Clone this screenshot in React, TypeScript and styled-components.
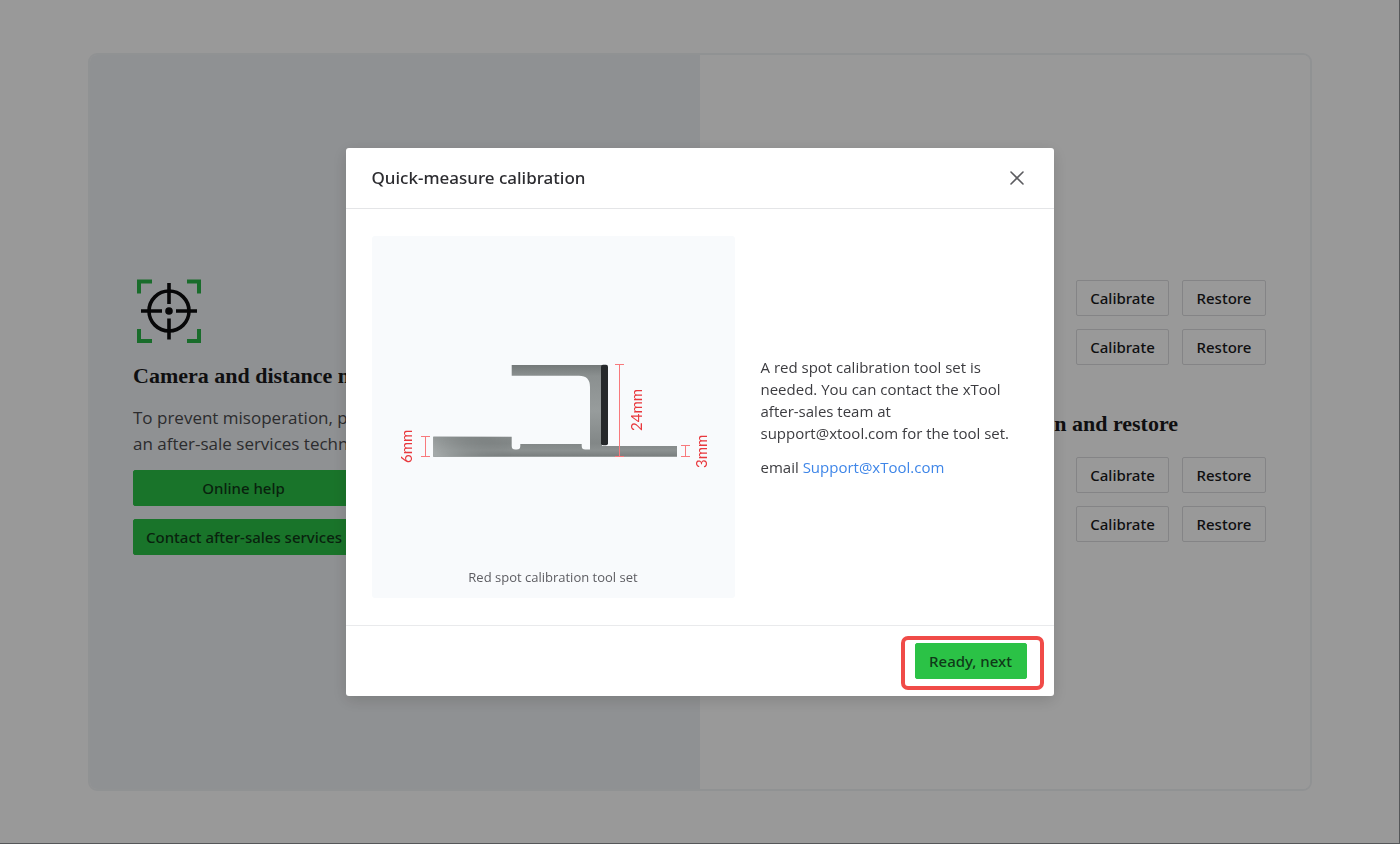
import React from "react";
import styled, { createGlobalStyle } from "styled-components";

const sans = `"Open Sans", "Noto Sans", sans-serif`;
const sansMedium = `"Noto Sans", "Open Sans", sans-serif`;

const GlobalStyle = createGlobalStyle`
  *, *::before, *::after { box-sizing: border-box; }
  body { margin: 0; background: #fff; color: #1a1a1c; font-family: ${sans}; }
  h1, h2, p, figure { margin: 0; }
`;

const Page = styled.main`
  display: flex;
  min-height: 100vh;
  padding: 53px 88px;
`;

const Card = styled.div`
  flex: 1;
  display: grid;
  grid-template-columns: 1fr 1fr;
  border: 2px solid #f1f3f6;
  border-radius: 9px;
  overflow: hidden;
`;

const Panel = styled.section<{ $tinted?: boolean }>`
  display: flex;
  flex-direction: column;
  justify-content: center;
  min-width: 0;
  padding: 0 44px ${(p) => (p.$tinted ? 14 : 68)}px 43px;
  background: ${(p) => (p.$tinted ? "#eff2f5" : "#fff")};
`;

const Heading = styled.h2`
  font-family: "Liberation Serif", serif;
  font-size: 22px;
  line-height: 26px;
  font-weight: 700;
  white-space: nowrap;
`;

const Intro = styled.p`
  margin: 16px 0 13px;
  font-size: 17px;
  line-height: 26px;
  color: #4a4a4e;
`;

const Target = styled.svg`
  display: block;
  width: 72px;
  height: 72px;
  margin-bottom: 16px;
`;

const Button = styled.button<{ $primary?: boolean; $width?: number }>`
  height: 36px;
  min-width: ${(p) => p.$width ?? 0}px;
  padding: 0 12px;
  border: 1px solid ${(p) => (p.$primary ? "#2bc246" : "#dcdddf")};
  border-radius: 2px;
  background: ${(p) => (p.$primary ? "#2bc246" : "#fff")};
  color: ${(p) => (p.$primary ? "#0f3a18" : "#1a1a1c")};
  font: 500 15px/20px ${sansMedium};
  white-space: nowrap;
`;

const HelpActions = styled.div`
  display: grid;
  gap: 13px;
  width: 221px;
`;

const Group = styled.div`
  & + & { margin-top: 46px; }
`;

const ActionRow = styled.div`
  display: flex;
  justify-content: flex-end;
  gap: 13px;
  margin-top: 13px;
  ${Heading} + & { margin-top: 20px; }
`;

const Overlay = styled.div`
  position: fixed;
  inset: 0;
  display: grid;
  place-items: center;
  background: rgba(0, 0, 0, 0.4);
  border: solid #555759;
  border-width: 0 1px 1px 0;
`;

const Dialog = styled.div`
  width: 708px;
  max-width: 100%;
  background: #fff;
  border-radius: 3px;
  box-shadow: 0 4px 16px rgba(0, 0, 0, 0.15);
`;

const DialogHeader = styled.header`
  display: flex;
  align-items: center;
  justify-content: space-between;
  height: 61px;
  padding: 0 26px;
  border-bottom: 1px solid #e4e5e7;
`;

const DialogTitle = styled.h1`
  font-family: ${sansMedium};
  font-size: 17px;
  line-height: 24px;
  font-weight: 500;
  color: #2c2c30;
`;

const Close = styled.button`
  display: grid;
  place-items: center;
  width: 22px;
  height: 22px;
  padding: 0;
  border: 0;
  background: none;
`;

const DialogBody = styled.div`
  display: grid;
  grid-template-columns: 363fr 267fr;
  gap: 26px;
  align-items: center;
  padding: 27px 26px;
`;

const Figure = styled.figure`
  display: flex;
  flex-direction: column;
  padding-bottom: 10px;
  background: #f8fafc;
  border-radius: 3px;
`;

const Caption = styled.figcaption`
  text-align: center;
  font-size: 13px;
  line-height: 22px;
  color: #5d5d62;
`;

const Drawing = styled.svg`
  display: block;
  width: 100%;
`;

const Copy = styled.div`
  display: grid;
  gap: 12px;
  font-size: 15px;
  line-height: 22px;
  color: #3c3c40;
  a { color: #3f86e8; text-decoration: none; }
`;

const DialogFooter = styled.footer`
  display: flex;
  justify-content: flex-end;
  height: 71px;
  padding: 17px 27px;
  border-top: 1px solid #e9eaec;
`;

const Highlight = styled.div`
  position: relative;
  height: 36px;
  &::after {
    content: "";
    position: absolute;
    inset: -7px -17px -11px -14px;
    border: 4px solid #f04b48;
    border-radius: 7px;
    pointer-events: none;
  }
`;

const groups = ["Camera calibration", "Distance Measurement calibration and restore"];

function TargetIcon() {
  return (
    <Target viewBox="0 0 72 72" fill="none" aria-hidden="true">
      <g stroke="#2bb548" strokeWidth="4">
        <path d="M6 18.500V6.500h13M54 6.500h12v12M66 54v12H54M19 66H6V54" />
      </g>
      <g stroke="#0c0c0e" strokeWidth="3.600">
        <circle cx="36" cy="36" r="20" />
        <path d="M36 8v21M36 43.500v21M8 36h21M43 36h21" />
      </g>
      <circle cx="36" cy="36" r="3.800" fill="#0c0c0e" />
    </Target>
  );
}

function ToolDrawing() {
  return (
    <Drawing viewBox="0 0 363 330" role="img" aria-label="Red spot calibration tool set">
      <defs>
        <linearGradient id="block" x1="75" y1="224" x2="95" y2="190" gradientUnits="userSpaceOnUse">
          <stop offset="0" stopColor="#a4a9a9" />
          <stop offset="0.5" stopColor="#8c9191" />
          <stop offset="1" stopColor="#737878" />
        </linearGradient>
        <linearGradient id="fade" x1="61" y1="0" x2="140" y2="0" gradientUnits="userSpaceOnUse">
          <stop offset="0" stopColor="#fff" />
          <stop offset="1" stopColor="#fff" stopOpacity="0" />
        </linearGradient>
        <mask id="blockMask">
          <rect x="61" y="200" width="79" height="21" fill="url(#fade)" />
        </mask>
        <linearGradient id="arm" x1="0" y1="129" x2="0" y2="221" gradientUnits="userSpaceOnUse">
          <stop offset="0" stopColor="#747979" />
          <stop offset="0.12" stopColor="#8b9090" />
          <stop offset="0.5" stopColor="#979c9c" />
          <stop offset="0.85" stopColor="#828787" />
          <stop offset="0.93" stopColor="#8b9090" />
          <stop offset="1" stopColor="#777c7c" />
        </linearGradient>
      </defs>
      <path
        fill="url(#arm)"
        d="M61.300 200.700H139.700V210a3.500 3.500 0 0 0 3.500 3.500h1.600a3.500 3.500 0 0 0 3.500-3.500V208H209.700v2a3.500 3.500 0 0 0 3.500 3.500H218V151Q218 139.700 207 139.700H139.700V129H230V210H305V220.700H61.300Z"
      />
      <rect x="61.300" y="200.700" width="78.400" height="20" fill="url(#block)" mask="url(#blockMask)" />
      <rect x="229" y="128.700" width="7" height="80.500" rx="2" fill="#26292b" />
      <g stroke="#f8797c" strokeWidth="1" fill="none">
        <path d="M53.500 200v21M49 200.500h9M49 220.500h9" />
        <path d="M247.500 128.500v92M243 128.500h9M243 220.500h9" />
        <path d="M313.500 209.500v11M309 209.500h9M309 220.500h9" />
      </g>
      <g fill="#e8383d" fontFamily="Lato, sans-serif" fontSize="15">
        <text transform="translate(40 227) rotate(-90)">6mm</text>
        <text transform="translate(270 195) rotate(-90)">24mm</text>
        <text transform="translate(335 232) rotate(-90)">3mm</text>
      </g>
    </Drawing>
  );
}

export default function App() {
  return (
    <>
      <GlobalStyle />
      <Page>
        <Card>
          <Panel $tinted>
            <TargetIcon />
            <Heading>Camera and distance measurement calibration</Heading>
            <Intro>
              To prevent misoperation, please use this page with
              <br />
              an after-sale services technician.
            </Intro>
            <HelpActions>
              <Button $primary>Online help</Button>
              <Button $primary>Contact after-sales services</Button>
            </HelpActions>
          </Panel>
          <Panel>
            {groups.map((title) => (
              <Group key={title}>
                <Heading>{title}</Heading>
                {[0, 1].map((row) => (
                  <ActionRow key={row}>
                    <Button $width={93}>Calibrate</Button>
                    <Button $width={84}>Restore</Button>
                  </ActionRow>
                ))}
              </Group>
            ))}
          </Panel>
        </Card>
      </Page>
      <Overlay>
        <Dialog role="dialog" aria-modal="true" aria-labelledby="dialog-title">
          <DialogHeader>
            <DialogTitle id="dialog-title">Quick-measure calibration</DialogTitle>
            <Close aria-label="Close">
              <svg width="14" height="14" viewBox="0 0 14 14" stroke="#5c5c60" strokeWidth="1.600" strokeLinecap="round">
                <path d="M1 1l12 12M13 1L1 13" />
              </svg>
            </Close>
          </DialogHeader>
          <DialogBody>
            <Figure>
              <ToolDrawing />
              <Caption>Red spot calibration tool set</Caption>
            </Figure>
            <Copy>
              <p>
                A red spot calibration tool set is needed. You can contact the xTool after-sales team at
                support@xtool.com for the tool set.
              </p>
              <p>
                email <a href="mailto:Support@xTool.com">Support@xTool.com</a>
              </p>
            </Copy>
          </DialogBody>
          <DialogFooter>
            <Highlight>
              <Button $primary $width={112}>Ready, next</Button>
            </Highlight>
          </DialogFooter>
        </Dialog>
      </Overlay>
    </>
  );
}
